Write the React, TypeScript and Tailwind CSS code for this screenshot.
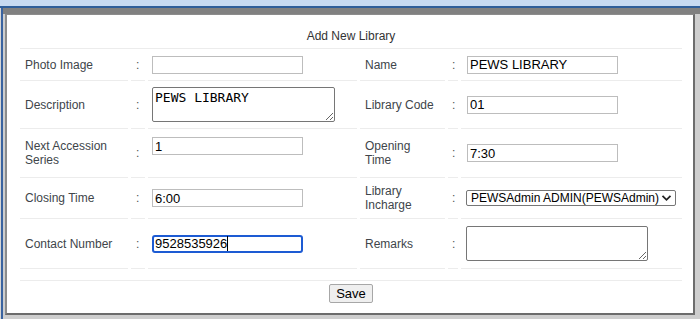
import React from "react";

const lbl = "text-[12px] leading-[14px] text-[#40454a]";
const cell = "border-b border-[#ececec] flex items-center";
const inp =
  "h-[18px] w-[151px] border border-[#bdbdbd] bg-white px-[2px] text-[13px] leading-[16px] text-black outline-none";

function Colon({ right }: { right?: boolean }) {
  return (
    <div className={`${cell} ${right ? "pl-[4px]" : "pl-[5px]"}`}>
      <span className="text-[12px] text-[#555]">:</span>
    </div>
  );
}

function Label({ children }: { children: React.ReactNode }) {
  return (
    <div className={`${cell} pl-[5px]`}>
      <span className={lbl}>{children}</span>
    </div>
  );
}

export default function App() {
  return (
    <div
      className="w-[700px] h-[319px] bg-[#cecece] flex flex-col overflow-hidden"
      style={{ fontFamily: '"Liberation Sans", Arial, sans-serif' }}
    >
      <div className="h-[8px] shrink-0 bg-[#c7daf2] border-b-2 border-[#2f5e9a]" />
      <div className="flex-1 flex min-h-0">
        <div className="w-[1px] bg-[#d6d6d6]" />
        <div className="w-[2px] bg-[#3a63a0]" />
        <div className="flex-1 flex flex-col min-w-0">
          <div className="h-[6px] shrink-0 bg-[#808080]" />
          <div className="flex-1 pl-[2px] pr-[5px] pb-[4px] min-h-0">
            <div className="h-full bg-white border-l-2 border-t border-[#8c8c8c] border-r-2 border-b-2 border-r-[#6c6c6c] border-b-[#6c6c6c] pl-[13px] pr-[11px]">
              <div className="h-[34px] border-b border-[#ececec] flex justify-center pt-[14px]">
                <span className="text-[12px] leading-[14px] text-[#333]">Add New Library</span>
              </div>
              <div className="grid grid-cols-[108px_14px_209px_85px_10px_221px] grid-rows-[32px_48px_49px_41px_50px] gap-x-[3px]">
                {/* Row 1 */}
                <Label>Photo Image</Label>
                <Colon />
                <div className={`${cell} pl-[4px]`}>
                  <input className={inp} readOnly defaultValue="" />
                </div>
                <Label>Name</Label>
                <Colon right />
                <div className={`${cell} pl-[6px]`}>
                  <input className={`${inp} w-[150px]`} readOnly defaultValue="PEWS LIBRARY" />
                </div>

                {/* Row 2 */}
                <Label>Description</Label>
                <Colon />
                <div className={`${cell} pl-[4px]`}>
                  <textarea
                    className="h-[35px] w-[183px] border border-[#767676] rounded-[2px] bg-white px-[2px] pt-[2px] text-[13px] leading-[15px] text-black outline-none"
                    style={{ fontFamily: '"DejaVu Sans Mono", "Liberation Mono", monospace' }}
                    readOnly
                    defaultValue="PEWS LIBRARY"
                  />
                </div>
                <Label>Library Code</Label>
                <Colon right />
                <div className={`${cell} pl-[6px]`}>
                  <input className={`${inp} w-[150px]`} readOnly defaultValue="01" />
                </div>

                {/* Row 3 */}
                <Label>
                  Next Accession
                  <br />
                  Series
                </Label>
                <Colon />
                <div className={`${cell} !items-start pl-[4px] pt-[8px]`}>
                  <input className={inp} readOnly defaultValue="1" />
                </div>
                <Label>
                  Opening
                  <br />
                  Time
                </Label>
                <Colon right />
                <div className={`${cell} pl-[6px]`}>
                  <input className={`${inp} w-[150px]`} readOnly defaultValue="7:30" />
                </div>

                {/* Row 4 */}
                <Label>Closing Time</Label>
                <Colon />
                <div className={`${cell} pl-[4px]`}>
                  <input className={inp} readOnly defaultValue="6:00" />
                </div>
                <Label>
                  Library
                  <br />
                  Incharge
                </Label>
                <Colon right />
                <div className={`${cell} pl-[5px]`}>
                  <div className="h-[16px] w-[210px] border border-[#767676] rounded-[2px] bg-white flex items-center pl-[4px] pr-[3px]">
                    <span className="flex-1 text-[12px] leading-[14px] text-black whitespace-nowrap">
                      PEWSAdmin ADMIN(PEWSAdmin)
                    </span>
                    <svg width="11" height="8" viewBox="0 0 11 8" className="shrink-0">
                      <path d="M1.5 1.8 L5.5 5.8 L9.5 1.8" fill="none" stroke="#222" strokeWidth="1.8" />
                    </svg>
                  </div>
                </div>

                {/* Row 5 */}
                <Label>Contact Number</Label>
                <Colon />
                <div className={`${cell} pl-[4px]`}>
                  <div className="h-[18px] w-[151px] border-2 border-[#1d5bd3] rounded-[3px] bg-white pl-[1px] flex items-center">
                    <span className="text-[13px] leading-[16px] text-black">9528535926</span>
                    <span className="w-[1px] h-[15px] bg-black" />
                  </div>
                </div>
                <Label>Remarks</Label>
                <Colon right />
                <div className={`${cell} pl-[5px]`}>
                  <textarea
                    className="h-[35px] w-[182px] border border-[#767676] rounded-[2px] bg-white outline-none"
                    readOnly
                    defaultValue=""
                  />
                </div>
              </div>
              <div className="mt-[11px] border-t border-[#ececec] flex justify-center pt-[3px]">
                <button className="h-[19px] w-[44px] bg-[#efefef] border border-[#a7a7a7] rounded-[2px] text-[13px] leading-[15px] text-black">
                  Save
                </button>
              </div>
            </div>
          </div>
        </div>
      </div>
    </div>
  );
}
